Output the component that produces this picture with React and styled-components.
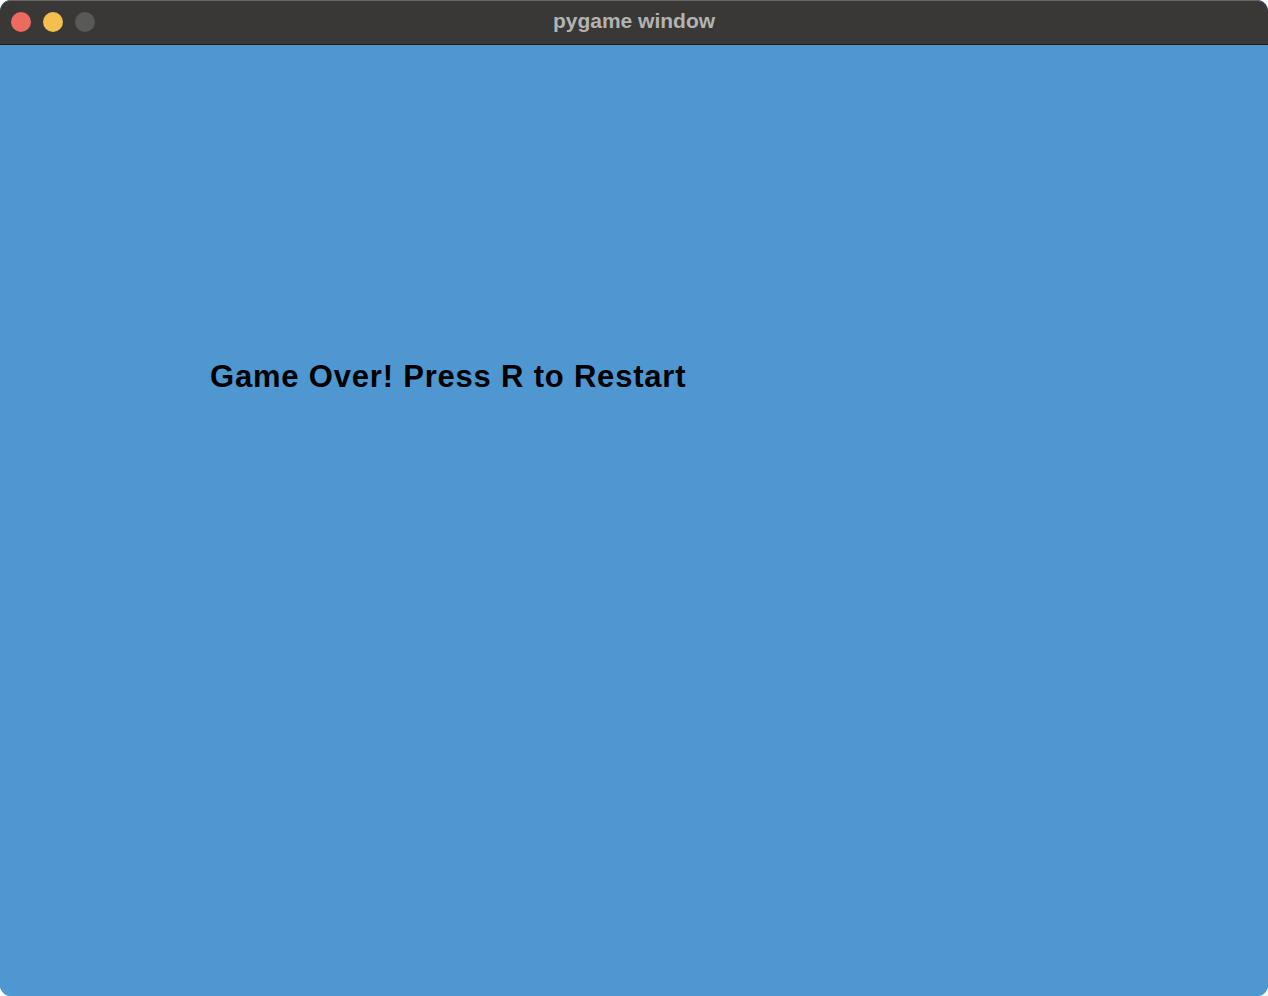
import styled, { createGlobalStyle } from "styled-components";

const GlobalStyle = createGlobalStyle`
    html, body {
        margin: 0;
        padding: 0;
        background: #ffffff;
    }
    #root {
        width: 1268px;
        height: 996px;
    }
`

const Window = styled.div`
    width: 1268px;
    height: 996px;
    display: flex;
    flex-direction: column;
    border-radius: 11px;
    overflow: hidden;
    background: #4f97d1;
    box-sizing: border-box;
`

const TitleBar = styled.div`
    position: relative;
    height: 44px;
    flex: 0 0 44px;
    display: flex;
    align-items: center;
    justify-content: center;
    background: #393836;
    border-bottom: 1px solid #1c1b1a;
    box-shadow: inset 0 1px 0 #6a6968;
    border-radius: 11px 11px 0 0;
`

const Lights = styled.div`
    position: absolute;
    left: 11px;
    top: 12px;
    display: flex;
    gap: 12px;
`

const Light = styled.span`
    width: 20px;
    height: 20px;
    border-radius: 50%;
    background: ${p => p.color};
`

const Title = styled.div`
    font-family: "Liberation Sans", Arial, sans-serif;
    font-weight: bold;
    font-size: 21px;
    color: #b3b3b3;
    margin-top: -2px;
`

const Canvas = styled.div`
    flex: 1;
    padding: 314px 0 0 210px;
    background: #4f97d1;
`

const Message = styled.div`
    font-family: "Liberation Sans", Arial, sans-serif;
    font-weight: bold;
    font-size: 31px;
    line-height: 36px;
    letter-spacing: 0.8px;
    color: #000000;
`

const App = () => {
    return(
        <>
            <GlobalStyle />
            <Window>
                <TitleBar>
                    <Lights>
                        <Light color="#ed6a5e" />
                        <Light color="#f5bf4f" />
                        <Light color="#595958" />
                    </Lights>
                    <Title>pygame window</Title>
                </TitleBar>
                <Canvas>
                    <Message>Game Over! Press R to Restart</Message>
                </Canvas>
            </Window>
        </>
    )
}

export default App
